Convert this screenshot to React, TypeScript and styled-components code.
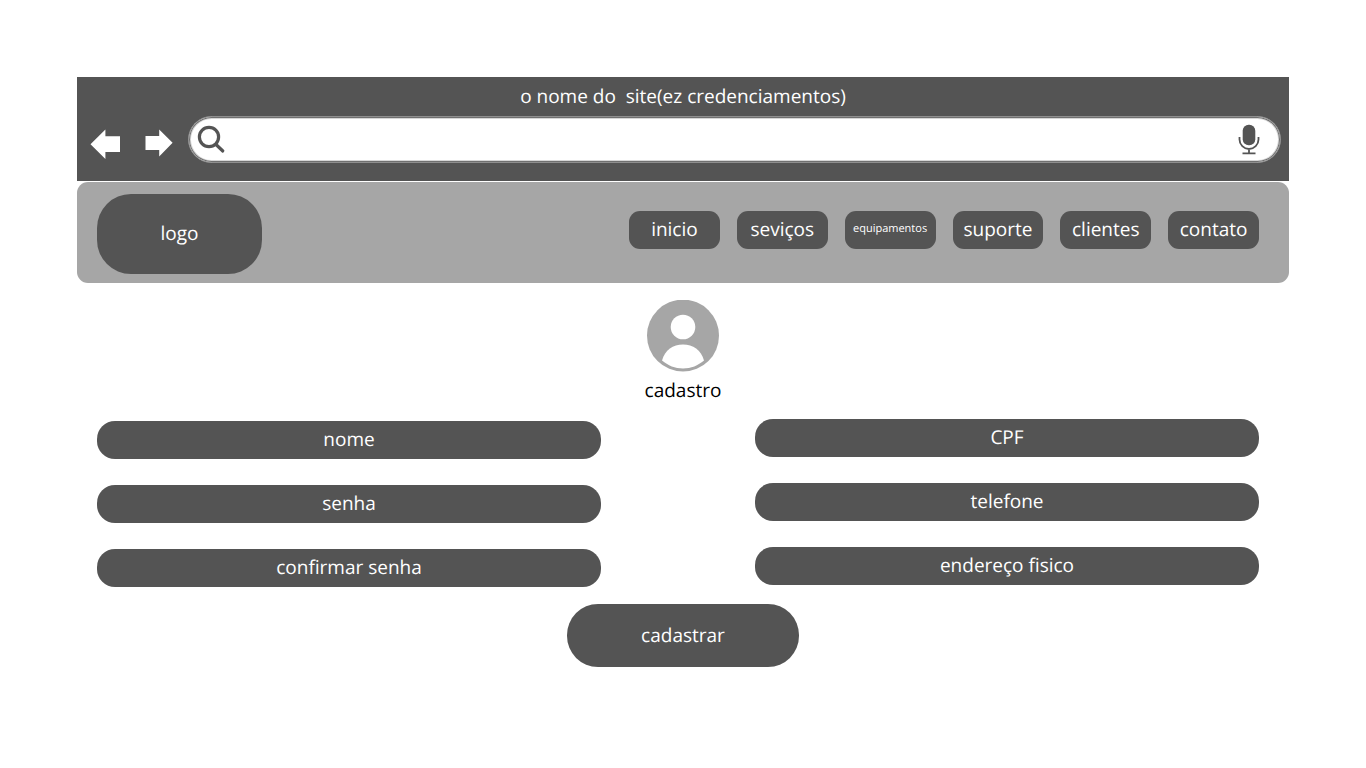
import React from "react";
import styled, { createGlobalStyle } from "styled-components";

const dark = "#545454";
const mid = "#a6a6a6";

const GlobalStyle = createGlobalStyle`
  *, *::before, *::after { box-sizing: border-box; }
  body {
    margin: 0;
    background: #fff;
    color: #000;
    font-family: "Open Sans", "Noto Sans", sans-serif;
    font-size: 19px;
    line-height: 26px;
    text-rendering: geometricPrecision;
  }
  button, input { font: inherit; text-rendering: inherit; }
`;

const Page = styled.div`
  padding: 77px;
`;

const BrowserBar = styled.header`
  height: 104px;
  padding: 6px 8px 0 12px;
  background: ${dark};
  color: #fff;
`;

const SiteTitle = styled.p`
  margin: 0;
  padding-right: 4px;
  text-align: center;
  white-space: pre;
`;

const AddressRow = styled.div`
  display: flex;
  align-items: center;
  margin-top: 7px;
`;

const ArrowButton = styled.button`
  display: flex;
  align-items: center;
  justify-content: center;
  width: 32px;
  height: 32px;
  margin: 8px 22px 0 0;
  padding: 0;
  border: 0;
  background: none;
  color: #fff;

  & + & {
    margin-right: 13px;
  }
`;

const SearchBox = styled.div`
  display: flex;
  flex: 1;
  align-items: center;
  height: 47px;
  padding: 0 19px 0 6px;
  border: 1px solid #8f8f8f;
  border-radius: 24px;
  background: #fff;
  box-shadow: inset 0 0 0 1px #707070, inset 0 0 0 2px #d6d6d6;
  color: ${dark};
`;

const SearchInput = styled.input`
  flex: 1;
  min-width: 0;
  padding: 0 12px;
  border: 0;
  outline: 0;
  background: none;
`;

const MicButton = styled.button`
  display: flex;
  padding: 0;
  border: 0;
  background: none;
  color: ${dark};
`;

const SiteHeader = styled.div`
  display: flex;
  align-items: flex-start;
  justify-content: space-between;
  height: 101px;
  margin-top: 1px;
  padding: 12px 30px 0 20px;
  border-radius: 11px;
  background: ${mid};
`;

const Logo = styled.div`
  display: flex;
  align-items: center;
  justify-content: center;
  width: 165px;
  height: 80px;
  padding-bottom: 2px;
  border-radius: 34px;
  background: ${dark};
  color: #fff;
`;

const Nav = styled.nav`
  display: grid;
  grid-template-columns: repeat(6, 1fr);
  column-gap: 17px;
  width: 630px;
  margin-top: 17px;
`;

const NavLink = styled.a<{ $small?: boolean }>`
  display: flex;
  align-items: center;
  justify-content: center;
  min-width: 0;
  height: 38px;
  padding-bottom: 2px;
  border-radius: 11px;
  background: ${dark};
  color: #fff;
  font-size: ${(p) => (p.$small ? "11px" : "19px")};
  text-decoration: none;
`;

const Main = styled.main`
  display: flex;
  flex-direction: column;
  align-items: center;
  padding: 17px 30px 0 20px;
`;

const Profile = styled.div`
  display: flex;
  flex-direction: column;
  align-items: center;
  margin-left: 10px;
`;

const Heading = styled.h1`
  margin: 5px 0 0;
  font-size: 19px;
  font-weight: 400;
  line-height: 26px;
`;

const Form = styled.form`
  display: grid;
  grid-template-columns: 1fr 1fr;
  column-gap: 154px;
  width: 100%;
  margin-top: 16px;
`;

const Column = styled.div<{ $lower?: boolean }>`
  display: flex;
  flex-direction: column;
  gap: 26px;
  padding-top: ${(p) => (p.$lower ? "2px" : "0")};
`;

const Field = styled.input`
  width: 100%;
  height: 38px;
  padding: 0 18px 2px;
  border: 0;
  border-radius: 18px;
  background: ${dark};
  color: #fff;
  text-align: center;

  &::placeholder {
    color: #fff;
    opacity: 1;
  }
`;

const Submit = styled.button`
  grid-column: 1 / -1;
  justify-self: center;
  width: 232px;
  height: 63px;
  margin: 17px 0 0 10px;
  padding: 0 0 2px;
  border: 0;
  border-radius: 31px;
  background: ${dark};
  color: #fff;
`;

const navItems = ["inicio", "seviços", "equipamentos", "suporte", "clientes", "contato"];
const leftFields = [
  { label: "nome", type: "text" },
  { label: "senha", type: "password" },
  { label: "confirmar senha", type: "password" },
];
const rightFields = [
  { label: "CPF", type: "text" },
  { label: "telefone", type: "tel" },
  { label: "endereço fisico", type: "text" },
];

export default function App() {
  return (
    <Page>
      <GlobalStyle />
      <BrowserBar>
        <SiteTitle>{"o nome do  site(ez credenciamentos)"}</SiteTitle>
        <AddressRow>
          <ArrowButton type="button" aria-label="voltar">
            <svg width="32" height="32" viewBox="0 0 32 32" fill="currentColor">
              <path d="M1.500 16.200 16.400 1.500V8.300H31V24H16.400V31Z" />
            </svg>
          </ArrowButton>
          <ArrowButton type="button" aria-label="avançar">
            <svg width="32" height="32" viewBox="0 0 32 32" fill="currentColor">
              <path d="M29.600 14.800 16.200 1.500V8H2.500V22H16.200V28.500Z" />
            </svg>
          </ArrowButton>
          <SearchBox>
            <svg width="32" height="32" viewBox="0 0 32 32" fill="none" stroke="currentColor" strokeLinecap="round">
              <circle cx="14" cy="13" r="9.600" strokeWidth="3.200" />
              <path d="M21 20.500 27.800 27" strokeWidth="3.200" />
            </svg>
            <SearchInput type="text" aria-label="endereço" />
            <MicButton type="button" aria-label="pesquisa por voz">
              <svg width="24" height="32" viewBox="0 0 24 32" fill="none" stroke="currentColor" strokeWidth="1.800">
                <rect x="5.700" y="0.700" width="12.600" height="20.600" rx="6" fill="currentColor" stroke="none" />
                <path d="M2.500 13v2.500a9.500 9.500 0 0 0 19 0V13M12 25v4M5.500 29.300h13" />
              </svg>
            </MicButton>
          </SearchBox>
        </AddressRow>
      </BrowserBar>
      <SiteHeader>
        <Logo>logo</Logo>
        <Nav>
          {navItems.map((item) => (
            <NavLink key={item} href="#" $small={item === "equipamentos"}>
              {item}
            </NavLink>
          ))}
        </Nav>
      </SiteHeader>
      <Main>
        <Profile>
          <svg width="72" height="72" viewBox="0 0 72 72">
            <circle cx="36" cy="35.600" r="36" fill={mid} />
            <circle cx="36" cy="27" r="12.300" fill="#fff" />
            <path d="M15 60.500C18 50 26 44.500 36 44.500S54 50 57 60.500C51 65.500 44 68.500 36 68.500S21 65.500 15 60.500Z" fill="#fff" />
          </svg>
          <Heading>cadastro</Heading>
        </Profile>
        <Form onSubmit={(e) => e.preventDefault()}>
          <Column $lower>
            {leftFields.map((f) => (
              <Field key={f.label} type={f.type} placeholder={f.label} aria-label={f.label} />
            ))}
          </Column>
          <Column>
            {rightFields.map((f) => (
              <Field key={f.label} type={f.type} placeholder={f.label} aria-label={f.label} />
            ))}
          </Column>
          <Submit type="submit">cadastrar</Submit>
        </Form>
      </Main>
    </Page>
  );
}
